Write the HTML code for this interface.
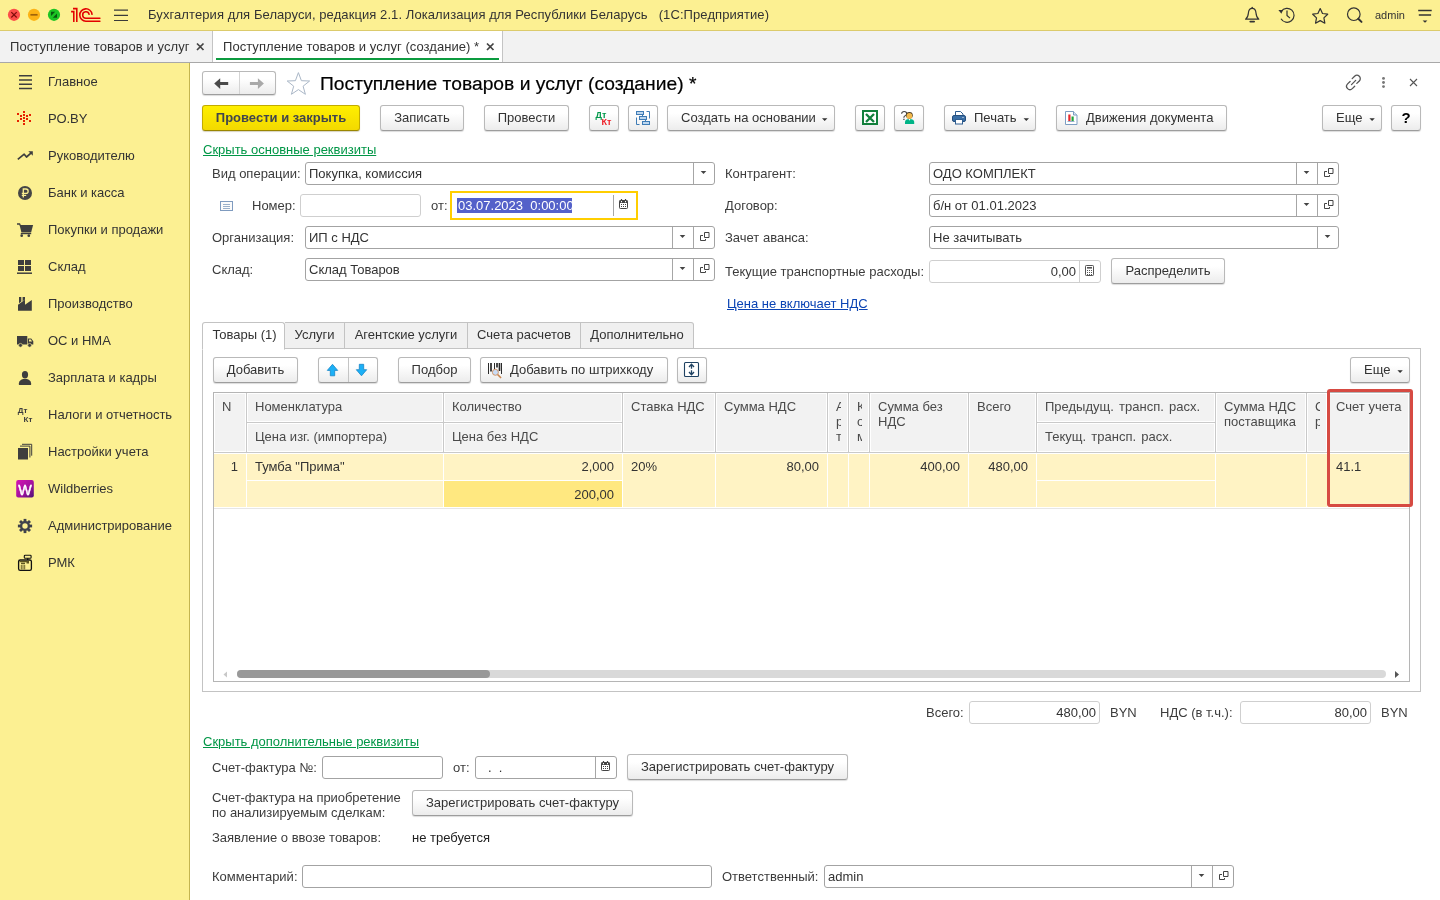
<!DOCTYPE html>
<html lang="ru">
<head>
<meta charset="utf-8">
<title>1C</title>
<style>
*{box-sizing:border-box;margin:0;padding:0}
html,body{width:1440px;height:900px;overflow:hidden;background:#fff}
body{font-family:"Liberation Sans",sans-serif;font-size:13px;color:#333;position:relative}
.a{position:absolute;white-space:nowrap}
.t{position:absolute;white-space:nowrap;line-height:16px;height:16px}
/* title bar */
#titlebar{left:0;top:0;width:1440px;height:31px;background:#fcf092;border-bottom:1px solid #dccb6c}
#tabsbar{left:0;top:31px;width:1440px;height:32px;background:#f2f2f2;border-bottom:1px solid #a8a8a8}
#sidebar{left:0;top:63px;width:190px;height:837px;background:#fcf092;border-right:1px solid #c4b550}
.side{left:48px;font-size:13px;color:#333}
/* buttons */
.btn{position:absolute;height:26px;border:1px solid #b9b9b9;border-bottom-color:#9d9d9d;border-radius:3px;background:linear-gradient(#ffffff 30%,#ececec);box-shadow:0 1px 1px rgba(0,0,0,.14);text-align:center;line-height:23px;font-size:13px;color:#333;white-space:nowrap}
.btn.y{background:linear-gradient(#ffef00,#f3d900);border-color:#c2ab00;border-bottom-color:#9a8600;font-weight:bold;color:#40454d;box-shadow:0 1px 1px rgba(90,75,0,.25)}
/* inputs */
.inp{position:absolute;height:23px;border:1px solid #a3a3a3;border-radius:3px;background:#fff;line-height:21px;font-size:13px;color:#333;padding-left:3px;white-space:nowrap;overflow:hidden}
.inp.l{border-color:#cfcfcf}
.inp.r{text-align:right;padding-right:3px;padding-left:0}
.sep{position:absolute;top:0;width:1px;height:21px;background:#a6a6a6}
.lbl{position:absolute;white-space:nowrap;line-height:16px;height:16px;font-size:13px;color:#3c3c3c}
.lnk{position:absolute;white-space:nowrap;line-height:16px;font-size:13px;text-decoration:underline}

/* tabs */
.tab{position:absolute;top:322px;height:27px;border:1px solid #c3c3c3;border-left:none;background:#f0f0f0;line-height:23px;text-align:center;font-size:13px;color:#333;white-space:nowrap}
.tab.act{background:#fff;border-left:1px solid #c3c3c3;border-bottom:1px solid #fff;border-radius:3px 3px 0 0;height:28px}
/* table */
.hc{position:absolute;background:#f2f2f2;border-right:1px solid #c9c9c9;border-bottom:1px solid #c9c9c9;box-shadow:inset 0 0 0 1px #fff;font-size:13px;line-height:15px;color:#4a4a4a;padding:6px 0 0 8px;overflow:hidden;white-space:nowrap}
.dc{position:absolute;background:#fff3c4;border-right:1px solid #fff;font-size:13px;line-height:16px;color:#333;padding:5px 8px 0 8px;overflow:hidden;white-space:nowrap}
.dc.r{text-align:right}
svg{position:absolute;overflow:visible}
</style>
</head>
<body>
<div id="wrap" style="position:absolute;left:0;top:0;width:1440px;height:900px;will-change:transform">
<!-- TITLE BAR -->
<div id="titlebar" class="a"></div>
<div class="t" id="apptitle" style="left:148px;top:7px;font-size:13px;letter-spacing:0.085px;color:#333">Бухгалтерия для Беларуси, редакция 2.1. Локализация для Республики Беларусь&nbsp;&nbsp; (1С:Предприятие)</div>
<div class="t" style="left:1375px;top:7px;font-size:11px;color:#333">admin</div>

<!-- TABS BAR -->
<div id="tabsbar" class="a"></div>
<div class="a" style="left:212px;top:31px;width:291px;height:31px;background:#fff;border-left:1px solid #c4c4c4;border-right:1px solid #c4c4c4"></div>
<div class="a" style="left:216px;top:58px;width:283px;height:2px;background:#0c9b3f"></div>
<div class="t" style="left:10px;top:39px;font-size:13px;letter-spacing:.08px;color:#333">Поступление товаров и услуг</div>
<div class="t" style="left:223px;top:39px;font-size:13px;letter-spacing:.05px;color:#333">Поступление товаров и услуг (создание) *</div>

<!-- SIDEBAR -->
<div id="sidebar" class="a"></div>
<div class="t side" style="top:74px">Главное</div>
<div class="t side" style="top:111px">РО.BY</div>
<div class="t side" style="top:148px">Руководителю</div>
<div class="t side" style="top:185px">Банк и касса</div>
<div class="t side" style="top:222px">Покупки и продажи</div>
<div class="t side" style="top:259px">Склад</div>
<div class="t side" style="top:296px">Производство</div>
<div class="t side" style="top:333px">ОС и НМА</div>
<div class="t side" style="top:370px">Зарплата и кадры</div>
<div class="t side" style="top:407px">Налоги и отчетность</div>
<div class="t side" style="top:444px">Настройки учета</div>
<div class="t side" style="top:481px">Wildberries</div>
<div class="t side" style="top:518px">Администрирование</div>
<div class="t side" style="top:555px">РМК</div>

<!-- FORM HEADER -->
<div class="a" style="left:202px;top:71px;width:74px;height:24px;border:1px solid #b9b9b9;border-bottom-color:#9d9d9d;border-radius:3px;background:linear-gradient(#fff 30%,#ececec);box-shadow:0 1px 1px rgba(0,0,0,.14)"></div>
<div class="a" style="left:239px;top:72px;width:1px;height:22px;background:#d4d4d4"></div>
<div class="t" id="formtitle" style="left:320px;top:72px;font-size:19.250px;line-height:24px;height:24px;color:#000;-webkit-text-stroke:.2px #000">Поступление товаров и услуг (создание) *</div>

<!-- MAIN TOOLBAR -->
<div class="btn y" style="left:202px;top:105px;width:158px">Провести и закрыть</div>
<div class="btn" style="left:380px;top:105px;width:84px">Записать</div>
<div class="btn" style="left:484px;top:105px;width:85px">Провести</div>
<div class="btn" style="left:589px;top:105px;width:30px"></div>
<div class="btn" style="left:628px;top:105px;width:30px"></div>
<div class="btn" style="left:667px;top:105px;width:168px;text-align:left;padding-left:13px">Создать на основании</div>
<div class="btn" style="left:855px;top:105px;width:30px"></div>
<div class="btn" style="left:894px;top:105px;width:30px"></div>
<div class="btn" style="left:944px;top:105px;width:92px;text-align:left;padding-left:29px">Печать</div>
<div class="btn" style="left:1056px;top:105px;width:171px;text-align:left;padding-left:29px">Движения документа</div>
<div class="btn" style="left:1322px;top:105px;width:60px;text-align:left;padding-left:13px">Еще</div>
<div class="btn" style="left:1391px;top:105px;width:30px;font-weight:bold;color:#000;font-size:15px">?</div>


<!-- LINK 1 -->
<div class="lnk" style="left:203px;top:142px;color:#009646">Скрыть основные реквизиты</div>

<!-- LEFT COLUMN -->
<div class="lbl" style="left:212px;top:166px">Вид операции:</div>
<div class="inp" style="left:305px;top:162px;width:410px">Покупка, комиссия<i class="sep" style="left:387px"></i></div>

<div class="lbl" style="left:252px;top:198px">Номер:</div>
<div class="inp l" style="left:300px;top:194px;width:121px"></div>
<div class="lbl" style="left:431px;top:198px">от:</div>
<div class="a" style="left:450px;top:191px;width:188px;height:29px;border:2px solid #ffce00;background:#fff"></div>
<div class="a" style="left:457px;top:198px;width:115px;height:15px;background:#5461c9"></div>
<div class="t" style="left:458px;top:198px;color:#fff;white-space:pre">03.07.2023  0:00:00</div>
<div class="a" style="left:613px;top:195px;width:1px;height:21px;background:#a6a6a6"></div>

<div class="lbl" style="left:212px;top:230px">Организация:</div>
<div class="inp" style="left:305px;top:226px;width:410px">ИП с НДС<i class="sep" style="left:366px"></i><i class="sep" style="left:387px"></i></div>

<div class="lbl" style="left:212px;top:262px">Склад:</div>
<div class="inp" style="left:305px;top:258px;width:410px">Склад Товаров<i class="sep" style="left:366px"></i><i class="sep" style="left:387px"></i></div>

<!-- RIGHT COLUMN -->
<div class="lbl" style="left:725px;top:166px">Контрагент:</div>
<div class="inp" style="left:929px;top:162px;width:410px">ОДО КОМПЛЕКТ<i class="sep" style="left:366px"></i><i class="sep" style="left:387px"></i></div>
<div class="lbl" style="left:725px;top:198px">Договор:</div>
<div class="inp" style="left:929px;top:194px;width:410px">б/н от 01.01.2023<i class="sep" style="left:366px"></i><i class="sep" style="left:387px"></i></div>
<div class="lbl" style="left:725px;top:230px">Зачет аванса:</div>
<div class="inp" style="left:929px;top:226px;width:410px">Не зачитывать<i class="sep" style="left:387px"></i></div>
<div class="lbl" style="left:725px;top:264px">Текущие транспортные расходы:</div>
<div class="inp l r" style="left:929px;top:260px;width:172px;padding-right:24px">0,00<i class="sep" style="left:149px;background:#cfcfcf"></i></div>
<div class="btn" style="left:1111px;top:258px;width:114px">Распределить</div>
<div class="lnk" style="left:727px;top:296px;color:#0b44b4">Цена не включает НДС</div>


<!-- TAB PANEL -->
<div class="a" style="left:202px;top:348px;width:1219px;height:344px;border:1px solid #c3c3c3"></div>
<div class="tab act" style="left:202px;width:83px;padding-left:2px">Товары (1)</div>
<div class="tab" style="left:285px;width:60px">Услуги</div>
<div class="tab" style="left:345px;width:123px">Агентские услуги</div>
<div class="tab" style="left:468px;width:113px">Счета расчетов</div>
<div class="tab" style="left:581px;width:113px;border-radius:0 3px 0 0">Дополнительно</div>

<!-- TABLE TOOLBAR -->
<div class="btn" style="left:213px;top:357px;width:85px">Добавить</div>
<div class="btn" style="left:318px;top:357px;width:60px"></div>
<div class="a" style="left:348px;top:358px;width:1px;height:24px;background:#c4c4c4"></div>
<div class="btn" style="left:398px;top:357px;width:73px">Подбор</div>
<div class="btn" style="left:480px;top:357px;width:188px;text-align:left;padding-left:29px">Добавить по штрихкоду</div>
<div class="btn" style="left:677px;top:357px;width:30px"></div>
<div class="btn" style="left:1350px;top:357px;width:60px;text-align:left;padding-left:13px">Еще</div>

<!-- TABLE -->
<div class="a" style="left:213px;top:392px;width:1197px;height:290px;border:1px solid #b5b5b5;background:#fff"></div>
<div id="thead">
<div class="hc" style="left:214px;top:393px;width:33px;height:60px;">N</div>
<div class="hc" style="left:247px;top:393px;width:197px;height:30px;">Номенклатура</div>
<div class="hc" style="left:247px;top:423px;width:197px;height:30px;padding-top:6px">Цена изг. (импортера)</div>
<div class="hc" style="left:444px;top:393px;width:179px;height:30px;">Количество</div>
<div class="hc" style="left:444px;top:423px;width:179px;height:30px;padding-top:6px">Цена без НДС</div>
<div class="hc" style="left:623px;top:393px;width:93px;height:60px;">Ставка НДС</div>
<div class="hc" style="left:716px;top:393px;width:112px;height:60px;">Сумма НДС</div>
<div class="hc" style="left:828px;top:393px;width:21px;height:60px;"><div style="width:5px;overflow:hidden">А<br>р<br>т</div></div>
<div class="hc" style="left:849px;top:393px;width:21px;height:60px;"><div style="width:5px;overflow:hidden">К<br>о<br>м</div></div>
<div class="hc" style="left:870px;top:393px;width:99px;height:60px;">Сумма без<br>НДС</div>
<div class="hc" style="left:969px;top:393px;width:68px;height:60px;">Всего</div>
<div class="hc" style="left:1037px;top:393px;width:179px;height:30px;word-spacing:1.600px">Предыдущ. трансп. расх.</div>
<div class="hc" style="left:1037px;top:423px;width:179px;height:30px;padding-top:6px;word-spacing:1.600px">Текущ. трансп. расх.</div>
<div class="hc" style="left:1216px;top:393px;width:91px;height:60px;">Сумма НДС<br>поставщика</div>
<div class="hc" style="left:1307px;top:393px;width:21px;height:60px;"><div style="width:5px;overflow:hidden">С<br>р</div></div>
<div class="hc" style="left:1328px;top:393px;width:81px;height:60px;border-right:none;">Счет учета</div>
</div>
<div id="tbody">
<div class="dc r" style="left:214px;top:454px;width:33px;height:53px;">1</div>
<div class="dc" style="left:247px;top:454px;width:197px;height:27px;border-bottom:1px solid #fff;">Тумба "Прима"</div>
<div class="dc" style="left:247px;top:481px;width:197px;height:26px;"></div>
<div class="dc r" style="left:444px;top:454px;width:179px;height:27px;border-bottom:1px solid #fff;">2,000</div>
<div class="dc r" style="left:444px;top:481px;width:179px;height:26px;background:#ffe880;padding-top:6px">200,00</div>
<div class="dc" style="left:623px;top:454px;width:93px;height:53px;">20%</div>
<div class="dc r" style="left:716px;top:454px;width:112px;height:53px;">80,00</div>
<div class="dc" style="left:828px;top:454px;width:21px;height:53px;"></div>
<div class="dc" style="left:849px;top:454px;width:21px;height:53px;"></div>
<div class="dc r" style="left:870px;top:454px;width:99px;height:53px;">400,00</div>
<div class="dc r" style="left:969px;top:454px;width:68px;height:53px;">480,00</div>
<div class="dc" style="left:1037px;top:454px;width:179px;height:27px;border-bottom:1px solid #fff;"></div>
<div class="dc" style="left:1037px;top:481px;width:179px;height:26px;"></div>
<div class="dc" style="left:1216px;top:454px;width:91px;height:53px;"></div>
<div class="dc" style="left:1307px;top:454px;width:21px;height:53px;"></div>
<div class="dc" style="left:1328px;top:454px;width:81px;height:53px;border-right:none;">41.1</div>
</div>
<div class="a" style="left:214px;top:508px;width:1195px;height:1px;background:#e6e6e6"></div>
<!-- red highlight -->
<div class="a" style="left:1327px;top:389px;width:86px;height:118px;border:3px solid #d64a42;border-radius:3px"></div>
<!-- h scrollbar -->
<div class="a" style="left:237px;top:670px;width:1149px;height:8px;border-radius:4px;background:#d9d9d9"></div>
<div class="a" style="left:237px;top:670px;width:253px;height:8px;border-radius:4px;background:#999"></div>
<svg style="left:222px;top:669.5px" width="6" height="9" viewBox="0 0 6 9"><path d="M5 1.5L1.5 4.5 5 7.5z" fill="#c8c8c8"/></svg>
<svg style="left:1394px;top:669.5px" width="6" height="9" viewBox="0 0 6 9"><path d="M1 1L5 4.5 1 8z" fill="#555"/></svg>


<!-- TOTALS -->
<div class="lbl" style="left:926px;top:705px">Всего:</div>
<div class="inp l r" style="left:969px;top:701px;width:131px">480,00</div>
<div class="lbl" style="left:1110px;top:705px">BYN</div>
<div class="lbl" style="left:1160px;top:705px">НДС (в т.ч.):</div>
<div class="inp l r" style="left:1240px;top:701px;width:131px">80,00</div>
<div class="lbl" style="left:1381px;top:705px">BYN</div>

<!-- EXTRA -->
<div class="lnk" style="left:203px;top:734px;color:#009646">Скрыть дополнительные реквизиты</div>
<div class="lbl" style="left:212px;top:760px">Счет-фактура №:</div>
<div class="inp" style="left:322px;top:756px;width:121px"></div>
<div class="lbl" style="left:453px;top:760px">от:</div>
<div class="inp" style="left:475px;top:756px;width:142px;padding-left:12px;white-space:pre">.  .<i class="sep" style="left:119px"></i></div>
<div class="btn" style="left:627px;top:754px;width:221px">Зарегистрировать счет-фактуру</div>

<div class="lbl" style="left:212px;top:790px;letter-spacing:-.06px">Счет-фактура на приобретение</div>
<div class="lbl" style="left:212px;top:805px">по анализируемым сделкам:</div>
<div class="btn" style="left:412px;top:790px;width:221px">Зарегистрировать счет-фактуру</div>

<div class="lbl" style="left:212px;top:830px">Заявление о ввозе товаров:</div>
<div class="lbl" style="left:412px;top:830px;color:#222">не требуется</div>

<div class="lbl" style="left:212px;top:869px">Комментарий:</div>
<div class="inp" style="left:302px;top:865px;width:410px"></div>
<div class="lbl" style="left:722px;top:869px">Ответственный:</div>
<div class="inp" style="left:824px;top:865px;width:410px">admin<i class="sep" style="left:366px"></i><i class="sep" style="left:387px"></i></div>


<svg id="ov" style="left:0;top:0;pointer-events:none" width="1440" height="900" viewBox="0 0 1440 900">
<!-- traffic lights -->
<circle cx="14" cy="14.8" r="6.1" fill="#fb4d49"/><path d="M11.3 12.1l5.4 5.4M16.7 12.1l-5.4 5.4" stroke="#7d0b0b" stroke-width="1.2" fill="none"/>
<circle cx="34" cy="14.8" r="6.1" fill="#fcb316"/><path d="M30.4 14.8h7.2" stroke="#a0640a" stroke-width="1.7"/>
<circle cx="54" cy="14.8" r="6.1" fill="#1cc424"/><path d="M51 11.8h4.2L51 16zM57 17.8h-4.2L57 13.6z" fill="#07590f"/>
<!-- 1C logo -->
<g fill="none" stroke="#e30000" stroke-width="1.55">
<path d="M73 8.6H76.8V21.9"/><path d="M71.1 11.6H73.8V21.9"/>
<path d="M92.05 14.3A6.15 6.15 0 1 0 85.9 21.15H99.9" stroke-linecap="round"/>
<path d="M89.1 14.3A3.25 3.25 0 1 0 85.9 18.25H99.9" stroke-linecap="round"/>
</g>
<!-- hamburger -->
<path d="M114 10.2h14M114 15.4h14M114 20.5h14" stroke="#3a3a3a" stroke-width="1.2"/>
<!-- bell -->
<g fill="none" stroke="#333" stroke-width="1.2" stroke-linejoin="round">
<path d="M1245.6 19.2c2.2-1.6 2.6-3.4 2.8-6.2.2-2.6 1.6-4.6 3.8-4.6s3.600 2 3.800 4.6c.2 2.800.6 4.600 2.800 6.200z"/>
<path d="M1250.300 21.600h3.800" stroke-linecap="round" stroke-width="1.800"/><path d="M1252.200 8.400v-.9" stroke-linecap="round" stroke-width="1.400"/>
<!-- history -->
<path d="M1281.300 11.300A7 7 0 1 1 1281 18.800"/><path d="M1287 10.500v5l3 2.600"/>
</g>
<path d="M1278.400 10l4.600 0-1.600 3.800z" fill="#333"/>
<!-- star -->
<path d="M1320.200 8.600l2.300 4.900 5.200.7-3.800 3.700.95 5.300-4.650-2.550-4.650 2.550.95-5.300-3.800-3.700 5.200-.7z" fill="none" stroke="#333" stroke-width="1.200" stroke-linejoin="round"/>
<!-- search -->
<circle cx="1353.800" cy="14.200" r="6.300" fill="none" stroke="#333" stroke-width="1.200"/><path d="M1358.300 18.700l3.200 3.200" stroke="#333" stroke-width="2" stroke-linecap="round"/>
<!-- filter lines -->
<path d="M1418.200 10.400h13.500M1418.800 15h12.300" stroke="#333" stroke-width="1.500"/><path d="M1422.600 20.400h4.800l-2.400 2.400z" fill="#333"/>
<!-- tab close x -->
<path d="M197 43.500l6.500 6.500M203.500 43.500l-6.500 6.500M487 43.500l6.500 6.500M493.500 43.500l-6.500 6.500" stroke="#444" stroke-width="1.700"/>
<!-- nav arrows -->
<path d="M214.200 83.600l6-5.300v3.800h8v3h-8v3.800z" fill="#4a4a4a"/>
<path d="M263.900 83.600l-6-5.300v3.800h-8v3h8v3.800z" fill="#a9a9a9"/>
<!-- fav star -->
<path d="M298.400 72.600l3 8.100 8.200.3-6.500 5.200 2.300 8.100-7-4.700-7 4.700 2.300-8.100-6.500-5.200 8.200-.3z" fill="#fff" stroke="#a9b6c6" stroke-width="1"/>
<!-- link, dots, close -->
<g fill="none" stroke="#555" stroke-width="1.300" stroke-linecap="round">
<path d="M1352.200 78.600l2.400-2.300a3.300 3.300 0 0 1 4.700 4.700l-2.500 2.400"/>
<path d="M1354.700 86.300l-2.400 2.300a3.300 3.300 0 0 1-4.700-4.700l2.500-2.400"/>
<path d="M1351.500 84.600l4.200-4.200"/>
</g>
<circle cx="1383.500" cy="78.400" r="1.450" fill="#777"/><circle cx="1383.500" cy="82.500" r="1.450" fill="#777"/><circle cx="1383.500" cy="86.600" r="1.450" fill="#777"/>
<path d="M1410 79l7 7M1417 79l-7 7" stroke="#555" stroke-width="1.100"/>
<!-- DtKt button -->
<text x="595.600" y="117.800" font-family="Liberation Sans" font-weight="bold" font-size="9" fill="#00984a">Дт</text>
<text x="601.600" y="124.900" font-family="Liberation Sans" font-weight="bold" font-size="9" fill="#ee1c25">Кт</text>
<!-- structure icon -->
<g stroke="#3f7cb6" stroke-width="1" fill="#bdd6ee">
<rect x="636.500" y="111.500" width="7" height="3"/><rect x="639.500" y="116.500" width="7" height="3"/><rect x="642.500" y="121.500" width="7" height="3"/>
<path d="M642.500 114.500v2M645.500 119.500v2M646.500 111.500h3v7M636.500 117.500v7h3" fill="none"/>
</g>
<!-- excel -->
<rect x="863" y="111" width="14" height="13" fill="#fff" stroke="#12803c" stroke-width="2"/>
<path d="M866 114l8 8M874 114l-8 8" stroke="#12803c" stroke-width="2.300"/>
<!-- help person -->
<text x="900.600" y="119.700" font-family="Liberation Sans" font-size="13" fill="#444">?</text>
<path d="M905 124v-2.200c0-1.700 1.600-2.900 4.500-2.900s4.700 1.200 4.700 2.900v2.200z" fill="#00b487"/>
<path d="M908.600 119l.9 1.700.9-1.700z" fill="#fff"/>
<circle cx="909.400" cy="115.300" r="3.400" fill="#4a3a20"/><circle cx="909.400" cy="115.900" r="2.900" fill="#f2b84b"/>
<!-- printer -->
<path d="M955.500 116v-4.500h5l2.500 2.500v2z" fill="#fff" stroke="#2e5d90" stroke-width="1"/>
<rect x="952.500" y="115.500" width="13" height="6" rx="1.500" fill="#3a6ea5" stroke="#254f7e"/>
<rect x="955.500" y="119.500" width="7" height="4.500" fill="#fff" stroke="#2e5d90"/>
<circle cx="963" cy="117.500" r=".6" fill="#fff"/>
<!-- dropdown arrows in buttons -->
<path d="M822 118.300h5.400l-2.700 2.800zM1023.600 118.300h5.400l-2.700 2.800zM1369.400 118.300h5.400l-2.700 2.800zM1397.400 370.300h5.400l-2.700 2.800z" fill="#333"/>
<!-- doc icon -->
<path d="M1065.500 111.500h8l3.500 3.500v9.500h-11.500z" fill="#fff" stroke="#7d9dc2"/><path d="M1073.500 111.500v3.500h3.500" fill="#dbe6f3" stroke="#7d9dc2"/>
<rect x="1068.300" y="114.500" width="2.200" height="6.500" fill="#e8262a"/><rect x="1071.500" y="116.500" width="2.200" height="4.500" fill="#1fa33b"/><path d="M1067.500 121.500h7" stroke="#7d9dc2" stroke-width=".8"/>
<!-- field icons -->
<path d="M700.7 171h5.600l-2.800 3z" fill="#444"/>
<path d="M679.7 235h5.600l-2.800 3z" fill="#444"/>
<path d="M679.7 267h5.600l-2.800 3z" fill="#444"/>
<path d="M1303.7 171h5.600l-2.800 3z" fill="#444"/>
<path d="M1303.7 203h5.600l-2.800 3z" fill="#444"/>
<path d="M1324.7 235h5.600l-2.800 3z" fill="#444"/>
<path d="M1198.7 874h5.600l-2.800 3z" fill="#444"/>
<path d="M704.5 232.5h4.500v5h-4.500z" fill="none" stroke="#444" stroke-width="1"/><path d="M703.0 235.5H700.5V240.5H705.5V239.0" fill="none" stroke="#444" stroke-width="1"/>
<path d="M704.5 264.5h4.500v5h-4.500z" fill="none" stroke="#444" stroke-width="1"/><path d="M703.0 267.5H700.5V272.5H705.5V271.0" fill="none" stroke="#444" stroke-width="1"/>
<path d="M1328.5 168.5h4.500v5h-4.500z" fill="none" stroke="#444" stroke-width="1"/><path d="M1327.0 171.5H1324.5V176.5H1329.5V175.0" fill="none" stroke="#444" stroke-width="1"/>
<path d="M1328.5 200.5h4.500v5h-4.500z" fill="none" stroke="#444" stroke-width="1"/><path d="M1327.0 203.5H1324.5V208.5H1329.5V207.0" fill="none" stroke="#444" stroke-width="1"/>
<path d="M1223.5 871.5h4.500v5h-4.500z" fill="none" stroke="#444" stroke-width="1"/><path d="M1222.0 874.5H1219.5V879.5H1224.5V878.0" fill="none" stroke="#444" stroke-width="1"/>
<rect x="619.5" y="200.5" width="8" height="8" rx=".8" fill="#fff" stroke="#444"/><rect x="619.5" y="200.5" width="8" height="2.500" fill="#444"/><path d="M621.5 199v2M625.5 199v2" stroke="#444" stroke-width="1.200"/><path d="M621.5 201v1.300M625.5 201v1.300" stroke="#fff" stroke-width="1"/><rect x="621" y="204" width="1" height="1" fill="#444"/><rect x="621" y="206" width="1" height="1" fill="#444"/><rect x="623" y="204" width="1" height="1" fill="#444"/><rect x="623" y="206" width="1" height="1" fill="#444"/><rect x="625" y="204" width="1" height="1" fill="#444"/><rect x="625" y="206" width="1" height="1" fill="#444"/>
<rect x="601.5" y="762.5" width="8" height="8" rx=".8" fill="#fff" stroke="#444"/><rect x="601.5" y="762.5" width="8" height="2.500" fill="#444"/><path d="M603.5 761v2M607.5 761v2" stroke="#444" stroke-width="1.200"/><path d="M603.5 763v1.300M607.5 763v1.300" stroke="#fff" stroke-width="1"/><rect x="603" y="766" width="1" height="1" fill="#444"/><rect x="603" y="768" width="1" height="1" fill="#444"/><rect x="605" y="766" width="1" height="1" fill="#444"/><rect x="605" y="768" width="1" height="1" fill="#444"/><rect x="607" y="766" width="1" height="1" fill="#444"/><rect x="607" y="768" width="1" height="1" fill="#444"/>
<rect x="1085.500" y="265.500" width="8" height="10" rx=".8" fill="#fff" stroke="#555"/><rect x="1087" y="267" width="5" height="1.600" fill="#555"/><rect x="1087" y="270" width="1" height="1" fill="#555"/><rect x="1087" y="272" width="1" height="1" fill="#555"/><rect x="1087" y="274" width="1" height="1" fill="#555"/><rect x="1089" y="270" width="1" height="1" fill="#555"/><rect x="1089" y="272" width="1" height="1" fill="#555"/><rect x="1089" y="274" width="1" height="1" fill="#555"/><rect x="1091" y="270" width="1" height="1" fill="#555"/><rect x="1091" y="272" width="1" height="1" fill="#555"/><rect x="1091" y="274" width="1" height="1" fill="#555"/>
<rect x="220.500" y="201.500" width="12" height="9" fill="#fbfbfb" stroke="#7f9bbf"/><path d="M223 204.500h7M223 206.500h7M223 208.500h7" stroke="#8fa7c4" stroke-width=".9"/>
<path d="M332.500 364.300l5.200 6.100h-3v5.400h-4.400v-5.400h-3z" fill="#1cb0f6" stroke="#1685c6" stroke-width=".8" stroke-linejoin="round"/>
<path d="M361.500 375.800l5.200-6.100h-3v-5.400h-4.400v5.400h-3z" fill="#1cb0f6" stroke="#1685c6" stroke-width=".8" stroke-linejoin="round"/>
<path d="M488.500 363v11M494.500 363v6M501.500 363v11" stroke="#2a2a2a" stroke-width="1"/><path d="M491 363v8.500M497 363v4.500M499.500 363v8" stroke="#2a2a2a" stroke-width="1.700"/><path d="M497.600 374.500l3 3" stroke="#c98650" stroke-width="1.700" stroke-linecap="round"/><circle cx="495.400" cy="372.300" r="3" fill="#c9dcf6" stroke="#cf9468" stroke-width="1"/>
<rect x="684.500" y="362.500" width="14" height="14" rx="1" fill="#fff" stroke="#1f4262" stroke-width="1.100"/><path d="M691.500 364.500v4.300M689 367l2.500-2.700 2.500 2.700M691.500 370.200v4.300M689 372l2.500 2.700 2.500-2.700" fill="none" stroke="#1f4262" stroke-width="1.300"/>
<!-- sidebar icons -->
<path d="M19 75.700h13M19 80h13M19 84.200h13M19 88.500h13" stroke="#3e3e3e" stroke-width="1.600"/>
<rect x="23" y="111" width="2" height="2" fill="#e62200"/><rect x="17" y="113" width="2" height="2" fill="#e62200"/><rect x="29" y="114" width="2" height="2" fill="#e62200"/><rect x="20" y="115" width="2" height="2" fill="#e62200"/><rect x="23" y="114" width="2" height="2" fill="#e62200"/><rect x="26" y="115" width="2" height="2" fill="#e62200"/><rect x="23" y="117" width="2" height="2" fill="#e62200"/><rect x="20" y="118" width="2" height="2" fill="#e62200"/><rect x="26" y="118" width="2" height="2" fill="#e62200"/><rect x="17" y="120" width="2" height="2" fill="#e62200"/><rect x="23" y="120" width="2" height="2" fill="#e62200"/><rect x="29" y="120" width="2" height="2" fill="#e62200"/><rect x="23" y="123" width="2" height="2" fill="#e62200"/>
<path d="M17.800 159.400l6.400-5.200 2.300 2.800 5-4.400" fill="none" stroke="#3e3e3e" stroke-width="1.700" stroke-linejoin="round"/><path d="M28.300 151.200h4.500v4.500z" fill="#3e3e3e"/>
<circle cx="25" cy="193" r="7" fill="#454545"/><path d="M23.300 197.500v-8.500h2.700a2.100 2.100 0 0 1 0 4.300h-4.200M21.800 195.300h4.400" fill="none" stroke="#fcf092" stroke-width="1.300"/>
<path d="M17 224h2.600l.6 1.200" fill="none" stroke="#3e3e3e" stroke-width="1.300"/><path d="M19.600 225h13.500l-2 7.500h-9.700z" fill="#3e3e3e"/><path d="M20.800 233.600h10.400" stroke="#3e3e3e" stroke-width="1.200"/><circle cx="21.700" cy="235.700" r="1.350" fill="#3e3e3e"/><circle cx="28.800" cy="235.700" r="1.350" fill="#3e3e3e"/>
<path d="M18 260h6v5h-6zM25 260h6v5h-6zM18 266h6v5h-6zM25 266h6v5h-6z" fill="#3e3e3e"/><path d="M17 273.200h15" stroke="#3e3e3e" stroke-width="1.500"/>
<path d="M19 297h2.300v4.600l-2.300 1.700zM22.600 297h2.400v2.600l-2.400 1.700zM18 304.800l7-5v5l6.800-4.800v10.800h-13.800z" fill="#3e3e3e"/>
<path d="M17 336h10.300v8.400h-10.300zM27.900 338.500h3.300l2.100 2.800v3.100h-5.400z" fill="#3e3e3e"/><path d="M29 339.600h1.800l1.300 1.800h-3.100z" fill="#fcf092"/><circle cx="20.500" cy="345.300" r="1.900" fill="#3e3e3e" stroke="#fcf092" stroke-width=".6"/><circle cx="29.600" cy="345.300" r="1.900" fill="#3e3e3e" stroke="#fcf092" stroke-width=".6"/>
<ellipse cx="25" cy="374.700" rx="3.100" ry="3.700" fill="#3e3e3e"/><path d="M18.900 385v-1.800c0-2.200 2.300-3.600 4.200-4.100h3.800c1.900.5 4.200 1.900 4.200 4.100v1.800z" fill="#3e3e3e"/>
<text x="17.800" y="413.400" font-family="Liberation Sans" font-weight="bold" font-size="8" fill="#3e3e3e">Дт</text><text x="23.600" y="422.100" font-family="Liberation Sans" font-weight="bold" font-size="8" fill="#3e3e3e">Кт</text>
<rect x="18" y="448" width="10" height="11.500" fill="#3e3e3e"/><path d="M20 446.100h9.900v11.400M22 444.300h9.700v11.400" fill="none" stroke="#3e3e3e" stroke-width="1"/>
<defs><linearGradient id="wg" x1="0" y1="0" x2="1" y2="1"><stop offset="0" stop-color="#d414b4"/><stop offset=".55" stop-color="#a3119f"/><stop offset="1" stop-color="#4a1276"/></linearGradient></defs><rect x="16.200" y="480" width="17.600" height="17.600" rx="2" fill="url(#wg)"/><text x="25" y="494.600" text-anchor="middle" font-family="Liberation Sans" font-weight="normal" font-size="14.300" stroke="#fff" stroke-width=".45" fill="#fff">W</text>
<rect x="-1.400" y="-7.100" width="2.800" height="3" transform="translate(25 526) rotate(0)" fill="#3f424b"/><rect x="-1.400" y="-7.100" width="2.800" height="3" transform="translate(25 526) rotate(45)" fill="#3f424b"/><rect x="-1.400" y="-7.100" width="2.800" height="3" transform="translate(25 526) rotate(90)" fill="#3f424b"/><rect x="-1.400" y="-7.100" width="2.800" height="3" transform="translate(25 526) rotate(135)" fill="#3f424b"/><rect x="-1.400" y="-7.100" width="2.800" height="3" transform="translate(25 526) rotate(180)" fill="#3f424b"/><rect x="-1.400" y="-7.100" width="2.800" height="3" transform="translate(25 526) rotate(225)" fill="#3f424b"/><rect x="-1.400" y="-7.100" width="2.800" height="3" transform="translate(25 526) rotate(270)" fill="#3f424b"/><rect x="-1.400" y="-7.100" width="2.800" height="3" transform="translate(25 526) rotate(315)" fill="#3f424b"/><circle cx="25" cy="526" r="3.900" fill="none" stroke="#3f424b" stroke-width="2.400"/>
<rect x="18.600" y="560" width="12.800" height="10.300" rx="1.600" fill="none" stroke="#111" stroke-width="1.300"/><rect x="24.300" y="555.300" width="6.800" height="3" rx=".8" fill="none" stroke="#111" stroke-width="1.100"/><path d="M27.700 558.300v1.700" stroke="#111" stroke-width="1.400"/><path d="M19.500 561.600h9.500M21 563.500h4M26.500 562.800h2.500" stroke="#5d5520" stroke-width="1.300"/><path d="M21.300 565v4.500M23 565v4.500M24.700 565v4.500" stroke="#5d5520" stroke-width=".9"/>
<!--ICONS4-->
</svg>




</div>
</body>
</html>
